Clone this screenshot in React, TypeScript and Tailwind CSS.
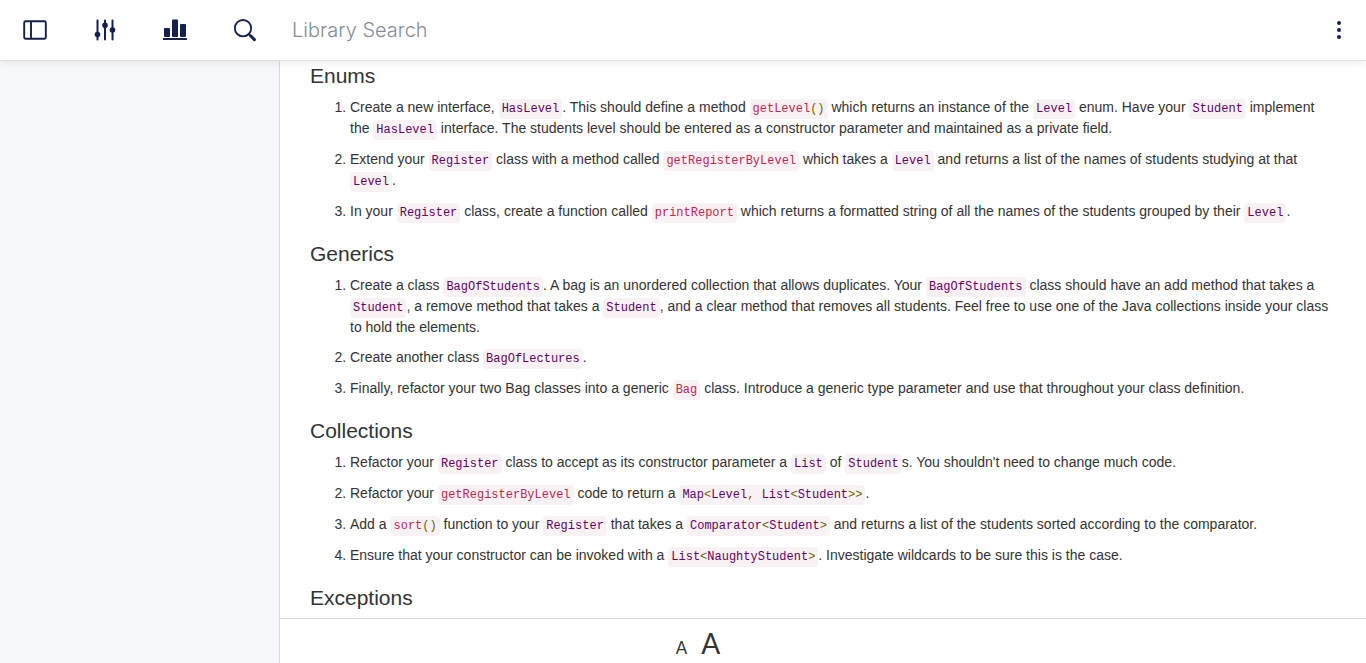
import type { ReactNode } from 'react';

function T({ children }: { children: ReactNode }) {
  return <span className="text-[#660066]">{children}</span>;
}

function P({ children }: { children: ReactNode }) {
  return <span className="text-[#666600]">{children}</span>;
}

function Code({ children }: { children: ReactNode }) {
  return (
    <code className="rounded bg-[#f9f2f4] px-[3px] py-[3px] font-['Liberation_Mono','Courier_New',monospace] text-[12px] leading-[18px] whitespace-nowrap text-[#c7254e]">
      {children}
    </code>
  );
}

function TypeCode({ children }: { children: ReactNode }) {
  return (
    <Code>
      <T>{children}</T>
    </Code>
  );
}

function Section({ title, items }: { title: string; items: ReactNode[] }) {
  return (
    <section>
      <h3 className="mt-5 mb-[10px] text-[21px] leading-[23px]">{title}</h3>
      <ol className="list-decimal pl-10">
        {items.map((item, i) => (
          <li key={i} className="mb-[10px]">
            {item}
          </li>
        ))}
      </ol>
    </section>
  );
}

const enums: ReactNode[] = [
  <>
    Create a new interface, <TypeCode>HasLevel</TypeCode>. This should define a method{' '}
    <Code>getLevel<P>()</P></Code> which returns an instance of the <TypeCode>Level</TypeCode> enum. Have your{' '}
    <TypeCode>Student</TypeCode> implement the <TypeCode>HasLevel</TypeCode> interface. The students level should be
    entered as a constructor parameter and maintained as a private field.
  </>,
  <>
    Extend your <TypeCode>Register</TypeCode> class with a method called <Code>getRegisterByLevel</Code> which takes a{' '}
    <TypeCode>Level</TypeCode> and returns a list of the names of students studying at that <TypeCode>Level</TypeCode>.
  </>,
  <>
    In your <TypeCode>Register</TypeCode> class, create a function called <Code>printReport</Code> which returns a
    formatted string of all the names of the students grouped by their <TypeCode>Level</TypeCode>.
  </>,
];

const generics: ReactNode[] = [
  <>
    Create a class <TypeCode>BagOfStudents</TypeCode>. A bag is an unordered collection that allows duplicates. Your{' '}
    <TypeCode>BagOfStudents</TypeCode> class should have an add method that takes a <TypeCode>Student</TypeCode>, a
    remove method that takes a <TypeCode>Student</TypeCode>, and a clear method that removes all students. Feel free to
    use one of the Java collections inside your class to hold the elements.
  </>,
  <>
    Create another class <TypeCode>BagOfLectures</TypeCode>.
  </>,
  <>
    Finally, refactor your two Bag classes into a generic <Code>Bag</Code> class. Introduce a generic type parameter and
    use that throughout your class definition.
  </>,
];

const collections: ReactNode[] = [
  <>
    Refactor your <TypeCode>Register</TypeCode> class to accept as its constructor parameter a{' '}
    <TypeCode>List</TypeCode> of <TypeCode>Student</TypeCode>s. You shouldn't need to change much code.
  </>,
  <>
    Refactor your <Code>getRegisterByLevel</Code> code to return a{' '}
    <Code>
      <T>Map</T><P>&lt;</P><T>Level</T><P>,</P> <T>List</T><P>&lt;</P><T>Student</T><P>&gt;&gt;</P>
    </Code>
    .
  </>,
  <>
    Add a <Code>sort<P>()</P></Code> function to your <TypeCode>Register</TypeCode> that takes a{' '}
    <Code>
      <T>Comparator</T><P>&lt;</P><T>Student</T><P>&gt;</P>
    </Code>{' '}
    and returns a list of the students sorted according to the comparator.
  </>,
  <>
    Ensure that your constructor can be invoked with a{' '}
    <Code>
      <T>List</T><P>&lt;</P><T>NaughtyStudent</T><P>&gt;</P>
    </Code>
    . Investigate wildcards to be sure this is the case.
  </>,
];

function PanelIcon() {
  return (
    <svg width="24" height="20" viewBox="0 0 24 20" fill="none" stroke="currentColor" strokeWidth="1.9">
      <rect x="1.2" y="1.2" width="21.6" height="17.6" rx="1.5" />
      <path d="M8 1v18" />
    </svg>
  );
}

function SlidersIcon() {
  return (
    <svg width="22" height="22" viewBox="0 0 22 22" fill="currentColor" stroke="currentColor" strokeWidth="2" strokeLinecap="round">
      <path d="M3.5 1.5v19M11 1.5v19M18.5 1.5v19" />
      <g stroke="none">
        <circle cx="3.5" cy="15.5" r="2.8" />
        <circle cx="11" cy="6.3" r="2.8" />
        <circle cx="18.5" cy="11" r="2.8" />
      </g>
    </svg>
  );
}

function ChartIcon() {
  return (
    <svg width="24" height="22" viewBox="0 0 24 22" fill="currentColor">
      <rect x="1" y="9" width="6" height="9" rx="1" />
      <rect x="9" y="0.5" width="6" height="17.5" rx="1" />
      <rect x="17" y="5" width="6" height="13" rx="1" />
      <rect x="0" y="19" width="24" height="2" rx="0.5" />
    </svg>
  );
}

function SearchIcon() {
  return (
    <svg width="24" height="24" viewBox="0 0 24 24" fill="none" stroke="currentColor" strokeLinecap="round">
      <circle cx="10" cy="10.2" r="8.2" strokeWidth="1.8" />
      <path d="M15.8 16l2.5 2.5" strokeWidth="2" />
      <path d="M17.8 18l3.6 3.6" strokeWidth="3" />
    </svg>
  );
}

function DotsIcon() {
  return (
    <svg width="4" height="18" viewBox="0 0 4 18" fill="currentColor">
      <circle cx="2" cy="2" r="2" />
      <circle cx="2" cy="9" r="2" />
      <circle cx="2" cy="16" r="2" />
    </svg>
  );
}

function IconButton({ label, children }: { label: string; children: ReactNode }) {
  return (
    <button type="button" aria-label={label} className="flex h-full w-[70px] items-center justify-center">
      {children}
    </button>
  );
}

export default function App() {
  return (
    <div className="flex h-screen flex-col bg-white font-['Liberation_Sans',Arial,sans-serif] text-[14px] leading-5 text-[#333333]">
      <header className="relative z-10 flex h-[61px] shrink-0 items-center border-b border-[#e1e1e3] bg-white text-[#14204f] shadow-[0_2px_8px_rgba(0,0,0,0.08)]">
        <IconButton label="Toggle sidebar"><PanelIcon /></IconButton>
        <IconButton label="Settings"><SlidersIcon /></IconButton>
        <IconButton label="Statistics"><ChartIcon /></IconButton>
        <IconButton label="Search"><SearchIcon /></IconButton>
        <input
          type="text"
          aria-label="Library Search"
          placeholder="Library Search"
          className="h-full min-w-0 flex-1 bg-transparent px-3 font-['Inter',sans-serif] text-[20px] font-light outline-none placeholder:text-[#858b98]"
        />
        <button type="button" aria-label="More options" className="flex h-full w-[54px] items-center justify-center">
          <DotsIcon />
        </button>
      </header>
      <div className="flex min-h-0 flex-1">
        <aside className="w-[280px] shrink-0 border-r border-[#d8d8d8] bg-[#f7f8fa]" />
        <div className="flex min-w-0 flex-1 flex-col">
          <main className="min-h-0 flex-1 overflow-hidden px-[30px]">
            <div className="-mt-[17px]">
              <Section title="Enums" items={enums} />
              <Section title="Generics" items={generics} />
              <Section title="Collections" items={collections} />
              <Section title="Exceptions" items={[]} />
            </div>
          </main>
          <footer className="flex h-[45px] shrink-0 items-baseline justify-center gap-[14px] border-t border-[#d8d8d8] pr-[250px] font-['Lato',sans-serif]">
            <button type="button" aria-label="Decrease text size" className="text-[17px] leading-[48px]">A</button>
            <button type="button" aria-label="Increase text size" className="text-[28px] leading-[48px]">A</button>
          </footer>
        </div>
      </div>
    </div>
  );
}
